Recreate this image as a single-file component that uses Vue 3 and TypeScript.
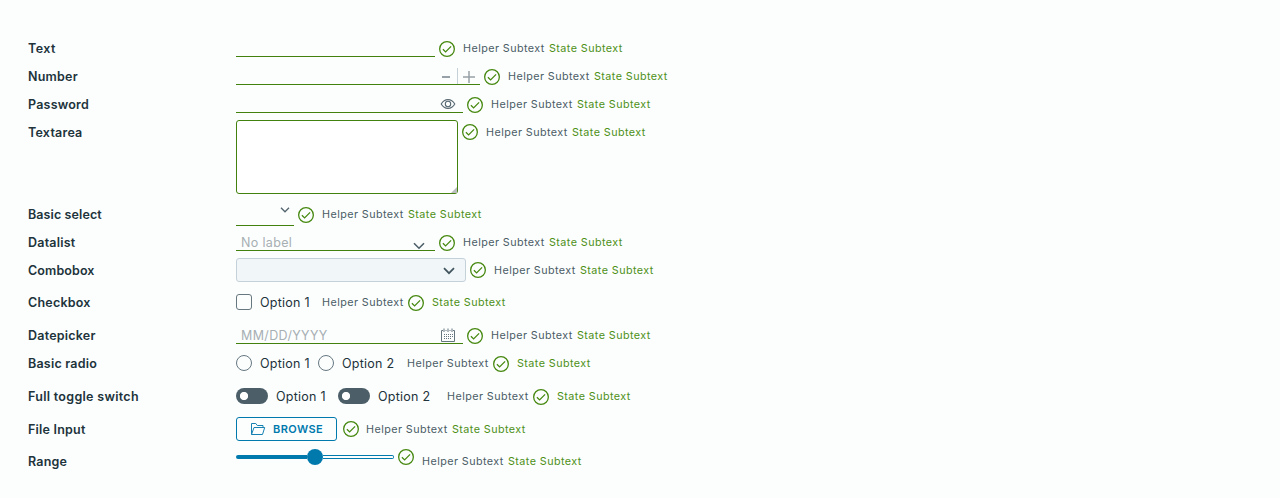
<script setup lang="ts">
type Kind = 'text' | 'number' | 'password' | 'textarea' | 'select' | 'datalist' | 'combobox'
  | 'checkbox' | 'date' | 'radio' | 'toggle' | 'file' | 'range'

interface Row {
  label: string
  kind: Kind
  options?: string[]
}

const rows: Row[] = [
  { label: 'Text', kind: 'text' },
  { label: 'Number', kind: 'number' },
  { label: 'Password', kind: 'password' },
  { label: 'Textarea', kind: 'textarea' },
  { label: 'Basic select', kind: 'select' },
  { label: 'Datalist', kind: 'datalist' },
  { label: 'Combobox', kind: 'combobox' },
  { label: 'Checkbox', kind: 'checkbox', options: ['Option 1'] },
  { label: 'Datepicker', kind: 'date' },
  { label: 'Basic radio', kind: 'radio', options: ['Option 1', 'Option 2'] },
  { label: 'Full toggle switch', kind: 'toggle', options: ['Option 1', 'Option 2'] },
  { label: 'File Input', kind: 'file' },
  { label: 'Range', kind: 'range' },
]
</script>

<template>
  <main class="form">
    <div v-for="row in rows" :key="row.label" class="row" :class="'row-' + row.kind">
      <div class="label">{{ row.label }}</div>

      <div v-if="row.options" class="options">
        <label v-for="(option, i) in row.options" :key="option" class="option">
          <span class="mark" :class="'mark-' + row.kind"></span>
          <span class="option-text" :class="{ second: i === 1 }">{{ option }}</span>
        </label>
      </div>
      <div v-else-if="row.kind === 'textarea'" class="area">
        <svg class="grip" width="6" height="6" viewBox="0 0 6 6"><path d="M0 6L6 0V6Z" fill="#b9bdc0" /></svg>
      </div>
      <div v-else-if="row.kind === 'combobox'" class="combo">
        <svg width="12" height="8" viewBox="0 0 12 8"><path d="M1 1.2l5 5 5-5" fill="none" stroke="#42555f" stroke-width="1.7" /></svg>
      </div>
      <div v-else-if="row.kind === 'file'" class="browse">
        <svg width="16" height="14" viewBox="0 0 16 14" fill="none" stroke="#1681b2" stroke-width="1" stroke-linejoin="round">
          <path d="M1.500 12.500V1.500h4.300l1.500 2h5.700v2M1.500 12.500L4 5.500h10.700l-2.200 7H1.500" />
        </svg>
        <span>BROWSE</span>
      </div>
      <div v-else-if="row.kind === 'range'" class="range">
        <span class="fill"></span><span class="thumb"></span><span class="rest"></span>
      </div>
      <div v-else class="field">
        <template v-if="row.kind === 'number'">
          <svg class="minus" width="8" height="2"><rect width="8" height="2" fill="#98a1a7" /></svg>
          <span class="divider"></span>
          <svg class="plus" width="12" height="12" viewBox="0 0 12 12"><path d="M0 6h12M6 0v12" stroke="#98a1a7" stroke-width="1.5" /></svg>
        </template>
        <svg v-if="row.kind === 'password'" class="eye" width="16" height="12" viewBox="0 0 16 12" fill="none" stroke="#586972" stroke-width="1.1">
          <path d="M1.2 6C2.8 3.2 5.1 1.6 8 1.6S13.2 3.2 14.8 6C13.2 8.8 10.900 10.400 8 10.400S2.800 8.800 1.200 6Z" />
          <circle cx="8" cy="6" r="2.7" />
        </svg>
        <svg v-if="row.kind === 'select'" class="select-arrow" width="10" height="6" viewBox="0 0 10 6"><path d="M1 .8l4 4 4-4" fill="none" stroke="#53656e" stroke-width="1.3" /></svg>
        <template v-if="row.kind === 'datalist'">
          <span class="placeholder no-label">No label</span>
          <svg class="list-arrow" width="12" height="8" viewBox="0 0 12 8"><path d="M1 1.200l5 5 5-5" fill="none" stroke="#4c5e67" stroke-width="1.600" /></svg>
        </template>
        <template v-if="row.kind === 'date'">
          <span class="placeholder date-text">MM/DD/YYYY</span>
          <svg class="calendar" width="16" height="15" viewBox="0 0 16 15" fill="none" stroke="#65757d">
            <path d="M3 2.500H1.500v11h13v-11H13M5.500 2.500h1M9.500 2.500h1" />
            <path d="M4 .5v3.500M8 .5v3.500M12 .5v3.500" />
            <path d="M4 6.500h9M4 8.500h9M4 10.500h7" stroke-dasharray="1 1" />
          </svg>
        </template>
      </div>

      <span v-if="row.options" class="helper">Helper Subtext</span>
      <svg class="check" width="16" height="16" viewBox="0 0 16 16" fill="none" stroke="#46880f" stroke-width="1.300">
        <circle cx="8" cy="8" r="7.350" />
        <path d="M3.900 8.200l2.700 2.700 5.500-5.500" />
      </svg>
      <span v-if="!row.options" class="helper">Helper Subtext</span>
      <span class="state">State Subtext</span>
    </div>
  </main>
</template>

<style>
html, body { margin: 0; background: #fcfefe; }
</style>

<style scoped>
.form {
  box-sizing: border-box;
  height: 498px;
  padding: 34px 28px 0;
  background: #fcfefe;
  font-family: Inter, "Noto Sans", sans-serif;
  color: #21333b;
}
.row { display: flex; align-items: flex-start; height: 28px; white-space: nowrap; }
.row-textarea { height: 82px; }
.row-combobox { height: 32px; }
.row-checkbox, .row-radio, .row-toggle { height: 33px; }
.row-file { height: 32px; }
.label { width: 208px; flex: none; font-size: 12.5px; font-weight: 600; line-height: 29px; letter-spacing: .22px; }
.row-select .label, .row-combobox .label { letter-spacing: .1px; }
.row-text .label { letter-spacing: .45px; }
.row-toggle .label { letter-spacing: .3px; }
.field {
  box-sizing: border-box;
  display: flex;
  flex: none;
  width: 199px;
  height: 23px;
  border-bottom: 1px solid #42810e;
}
.row-number .field { width: 244px; justify-content: flex-end; }
.row-password .field { width: 227px; justify-content: flex-end; }
.row-select .field { width: 58px; height: 26px; justify-content: flex-end; }
.row-datalist .field, .row-date .field { justify-content: space-between; }
.row-date .field { width: 227px; }
.minus { margin: 14px 7px 0 0; }
.divider { width: 1px; height: 16px; margin: 6px 5px 0 0; background: #c5d0d7; }
.plus { margin: 9px 5px 0 0; }
.eye { margin: 8px 7px 0 0; }
.select-arrow { margin: 7px 4px 0 0; }
.list-arrow { margin: 14px 10px 0 0; }
.calendar { margin: 7px 7px 0 0; }
.placeholder { margin-left: 5px; font-size: 12.5px; line-height: 29px; letter-spacing: .35px; color: #a7afb3; }
.area {
  box-sizing: border-box;
  display: flex;
  align-items: flex-end;
  justify-content: flex-end;
  flex: none;
  width: 222px;
  height: 74px;
  margin-top: 2px;
  border: 1px solid #42810e;
  border-radius: 3px;
  background: #fff;
}
.combo {
  box-sizing: border-box;
  display: flex;
  justify-content: flex-end;
  flex: none;
  width: 230px;
  height: 24px;
  margin-top: 2px;
  padding: 8px 10px 0 0;
  border: 1px solid #c5d1d8;
  border-radius: 3px;
  background: #f1f6f8;
}
.options { display: flex; gap: 8px; margin-right: 12px; }
.option { display: flex; align-items: flex-start; gap: 8px; }
.row-toggle .options { gap: 12px; margin-right: 16px; }
.option-text { width: 50px; font-size: 12.5px; line-height: 29px; letter-spacing: .25px; }
.option-text.second { width: 53px; }
.mark { box-sizing: border-box; width: 16px; height: 16px; margin-top: 6px; border: 1px solid #667780; }
.mark-checkbox { border-radius: 3px; }
.mark-radio { border-radius: 50%; }
.mark-toggle { width: 32px; border: 0; border-radius: 8px; background: radial-gradient(circle at 8px 8px, #fff 3.700px, #4c5f68 4.500px); }
.browse {
  box-sizing: border-box;
  display: flex;
  align-items: center;
  gap: 7px;
  flex: none;
  width: 101px;
  height: 24px;
  margin: 2px 2px 0 0;
  padding-left: 13px;
  border: 1px solid #0079ad;
  border-radius: 3px;
  color: #0079ad;
  font-size: 11px;
  font-weight: 600;
  letter-spacing: .4px;
}
.range { display: flex; align-items: center; flex: none; width: 158px; height: 16px; margin-top: 2px; }
.fill { width: 71px; height: 4px; border-radius: 2px 0 0 2px; background: #0079ad; }
.thumb { width: 16px; height: 16px; border-radius: 50%; background: #0079ad; }
.rest { box-sizing: border-box; width: 71px; height: 4px; border: 1px solid #0079ad; border-left: 0; border-radius: 0 2px 2px 0; }
.check { flex: none; margin: 7px 8px 0 4px; }
.row-textarea .check, .row-combobox .check, .row-file .check { margin-top: 6px; }
.row-range .check { margin-top: 2px; }
.helper, .state { font-size: 10.75px; line-height: 29px; letter-spacing: .44px; }
.helper { width: 82px; color: #4a5c65; }
.state { color: #4d9017; }
.helper + .state { margin-left: 4px; }
.row-file .helper { margin-left: -1px; }
</style>
